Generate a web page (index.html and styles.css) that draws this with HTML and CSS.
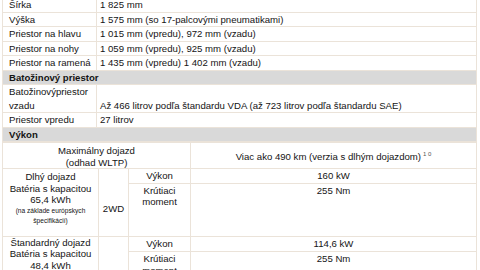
FILE: index.html
```html
<!DOCTYPE html>
<html lang="sk">
<head>
<meta charset="utf-8">
<title>Technické údaje</title>
<link rel="stylesheet" href="styles.css">
</head>
<body>
<div class="page">
  <table class="spec">
    <colgroup><col class="c-label"><col></colgroup>
    <tbody>
      <tr><td>Šírka</td><td>1 825 mm</td></tr>
      <tr><td>Výška</td><td>1 575 mm (so 17-palcovými pneumatikami)</td></tr>
      <tr><td>Priestor na hlavu</td><td>1 015 mm (vpredu), 972 mm (vzadu)</td></tr>
      <tr><td>Priestor na nohy</td><td>1 059 mm (vpredu), 925 mm (vzadu)</td></tr>
      <tr><td>Priestor na ramená</td><td>1 435 mm (vpredu) 1 402 mm (vzadu)</td></tr>
      <tr class="section"><th colspan="2">Batožinový priestor</th></tr>
      <tr class="row-tall"><td>Batožinovýpriestor vzadu</td><td class="bottom">Až 466 litrov podľa štandardu VDA (až 723 litrov podľa štandardu SAE)</td></tr>
      <tr><td>Priestor vpredu</td><td>27 litrov</td></tr>
      <tr class="section"><th colspan="2">Výkon</th></tr>
    </tbody>
  </table>
  <table class="perf">
    <colgroup><col class="p1"><col class="p2"><col class="p3"><col></colgroup>
    <tbody>
      <tr class="range"><td colspan="3">Maximálny dojazd<br>(odhad WLTP)</td><td>Viac ako 490 km (verzia s dlhým dojazdom)<sup class="note">1 0</sup></td></tr>
      <tr class="sub"><td rowspan="2" class="variant">Dlhý dojazd<br>Batéria s kapacitou<br>65,4 kWh<span class="small">(na základe európskych<br>špecifikácií)</span></td><td rowspan="2" class="drive">2WD</td><td>Výkon</td><td>160 kW</td></tr>
      <tr class="torque"><td>Krútiaci<br>moment</td><td>255 Nm</td></tr>
      <tr class="sub"><td rowspan="2" class="variant variant-2">Štandardný dojazd<br>Batéria s kapacitou<br>48,4 kWh<span class="small">(na základe európskych<br>špecifikácií)</span></td><td rowspan="2" class="drive">2WD</td><td>Výkon</td><td>114,6 kW</td></tr>
      <tr class="torque"><td>Krútiaci<br>moment</td><td>255 Nm</td></tr>
    </tbody>
  </table>
</div>
</body>
</html>
```
FILE: styles.css
```css
html, body {
  margin: 0;
  padding: 0;
  background: #ffffff;
}
body {
  font-family: "Liberation Sans", Arial, sans-serif;
  font-size: 9.6px;
  line-height: 11.5px;
  color: #141414;
}
.page {
  width: 475px;
  margin: -3px 0 0 2px;
}
table {
  width: 475px;
  border-collapse: collapse;
  table-layout: fixed;
}
td, th {
  border: 1px solid #ebe3d9;
  padding: 1px 3px;
  vertical-align: middle;
  text-align: left;
}
.spec td:first-child {
  padding-left: 6px;
}
.c-label { width: 94px; }
.section th {
  background: #d9d9d9;
  font-weight: bold;
  padding-left: 6px;
}
.row-tall td {
  line-height: 13.5px;
  padding-top: 0;
  padding-bottom: 0;
}
.row-tall td:first-child {
  padding-right: 8px;
}
.bottom { vertical-align: bottom; }

.perf td { text-align: center; }
.p1 { width: 96px; }
.p2 { width: 30px; }
.p3 { width: 62px; }
.range td { padding: 2px 3px 0; }
.note {
  font-size: 6px;
  vertical-align: 4px;
  line-height: 0;
  margin-left: 2px;
  color: #555;
}
.variant {
  padding: 1px 2px 8px;
}
.variant-2 {
  padding-top: 0;
  padding-bottom: 12px;
}
.small {
  display: block;
  font-size: 6.6px;
  line-height: 10.5px;
}
.drive {
  padding-top: 14px;
}
.torque {
  height: 53px;
}
.torque td {
  vertical-align: top;
}
```
